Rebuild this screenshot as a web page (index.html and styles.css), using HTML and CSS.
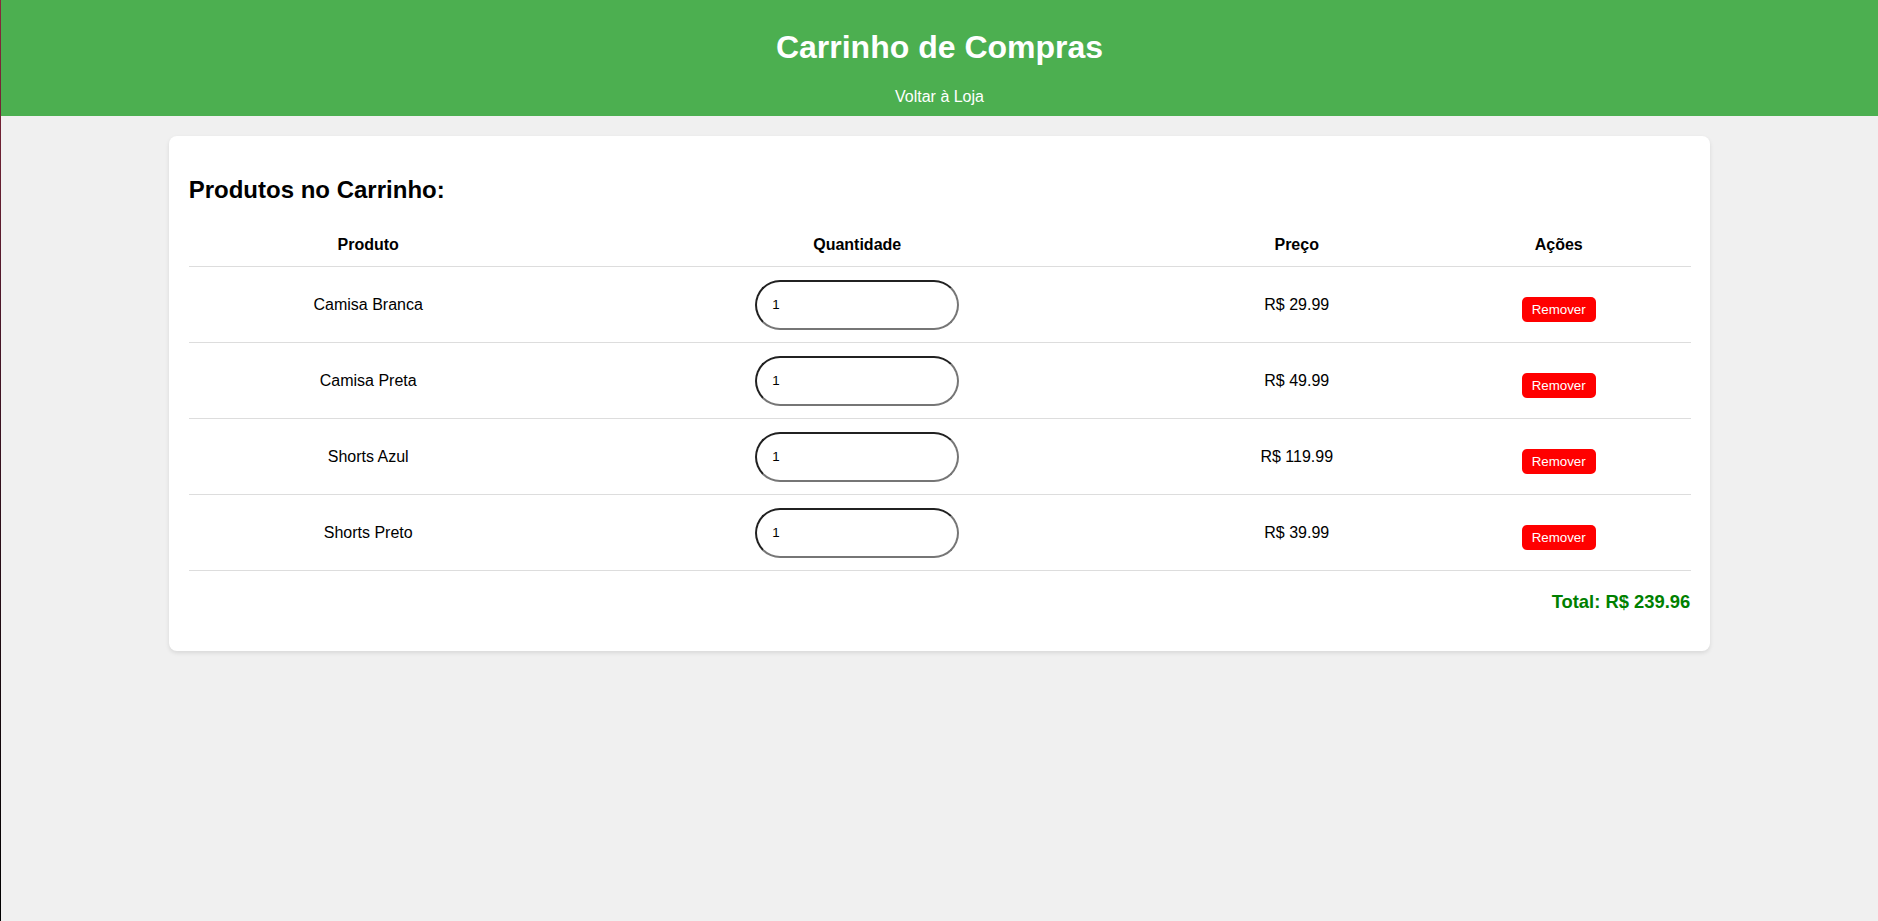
FILE: index.html
```html
<!DOCTYPE html>
<html lang="pt-BR">
<head>
<meta charset="utf-8">
<title>Carrinho de Compras</title>
<link rel="stylesheet" href="styles.css">
</head>
<body>
<header class="site-header">
  <h1 class="site-title">Carrinho de Compras</h1>
  <nav class="site-nav"><a class="nav-link" href="#">Voltar à Loja</a></nav>
</header>
<main class="cart">
  <h2 class="cart-title">Produtos no Carrinho:</h2>
  <table class="cart-table">
    <colgroup>
      <col class="col-produto">
      <col class="col-qtd">
      <col class="col-preco">
      <col class="col-acoes">
    </colgroup>
    <thead>
      <tr><th>Produto</th><th>Quantidade</th><th>Preço</th><th>Ações</th></tr>
    </thead>
    <tbody>
      <tr>
        <td>Camisa Branca</td>
        <td><input class="qty" type="text" value="1"></td>
        <td>R$ 29.99</td>
        <td><button class="remove-btn">Remover</button></td>
      </tr>
      <tr>
        <td>Camisa Preta</td>
        <td><input class="qty" type="text" value="1"></td>
        <td>R$ 49.99</td>
        <td><button class="remove-btn">Remover</button></td>
      </tr>
      <tr>
        <td>Shorts Azul</td>
        <td><input class="qty" type="text" value="1"></td>
        <td>R$ 119.99</td>
        <td><button class="remove-btn">Remover</button></td>
      </tr>
      <tr>
        <td>Shorts Preto</td>
        <td><input class="qty" type="text" value="1"></td>
        <td>R$ 39.99</td>
        <td><button class="remove-btn">Remover</button></td>
      </tr>
    </tbody>
  </table>
  <p class="cart-total">Total: R$ 239.96</p>
</main>
</body>
</html>
```

FILE: styles.css
```css
html, body {
  margin: 0;
  padding: 0;
}

body {
  min-height: 921px;
  box-sizing: border-box;
  background: #f0f0f0;
  font-family: "Liberation Sans", Arial, sans-serif;
  color: #000;
  border-left: 1px solid #000;
  border-image: linear-gradient(to bottom, #8a2a3c 0%, #4a1628 35%, #1c0a10 70%, #000 100%) 1;
}

.site-header {
  background: #4caf50;
  color: #fff;
  text-align: center;
  padding: 9px 0 10px;
}

.site-title {
  font-size: 32px;
  font-weight: bold;
  margin: 20px 0 22px;
}

.site-nav {
  font-size: 16px;
}

.nav-link {
  color: #fff;
  text-decoration: none;
}

.cart {
  display: block;
  width: 80%;
  margin: 20px auto;
  padding: 20px;
  background: #fff;
  border-radius: 8px;
  box-shadow: 0 2px 4px rgba(0, 0, 0, 0.1);
}

.cart-title {
  font-size: 24px;
  font-weight: bold;
  margin: 20px 0 20px;
}

.cart-table {
  width: 100%;
  table-layout: fixed;
  border-collapse: collapse;
}

.col-produto { width: 359px; }
.col-qtd { width: 619px; }
.col-preco { width: 260px; }
.col-acoes { width: 264px; }

.cart-table th,
.cart-table td {
  padding: 12px;
  text-align: center;
  vertical-align: middle;
  font-size: 16px;
  border-bottom: 1px solid #ddd;
}

.cart-table td {
  padding: 12.5px 12px;
}

.cart-table th {
  font-weight: bold;
}

.qty {
  box-sizing: border-box;
  width: 204px;
  height: 50px;
  padding: 0 15px;
  border: 2px inset rgb(118, 118, 118);
  border-radius: 25px;
  font-family: "Liberation Sans", Arial, sans-serif;
  font-size: 13.333px;
  color: #000;
  background: #fff;
  vertical-align: middle;
}

.remove-btn {
  margin-top: 10px;
  padding: 5px 10px;
  border: none;
  border-radius: 5px;
  background: #f00;
  color: #fff;
  font-family: "Liberation Sans", Arial, sans-serif;
  font-size: 13.333px;
  cursor: pointer;
}

.cart-total {
  text-align: right;
  font-size: 18.4px;
  font-weight: bold;
  color: #008000;
  margin: 20px 0 18px;
}
```
